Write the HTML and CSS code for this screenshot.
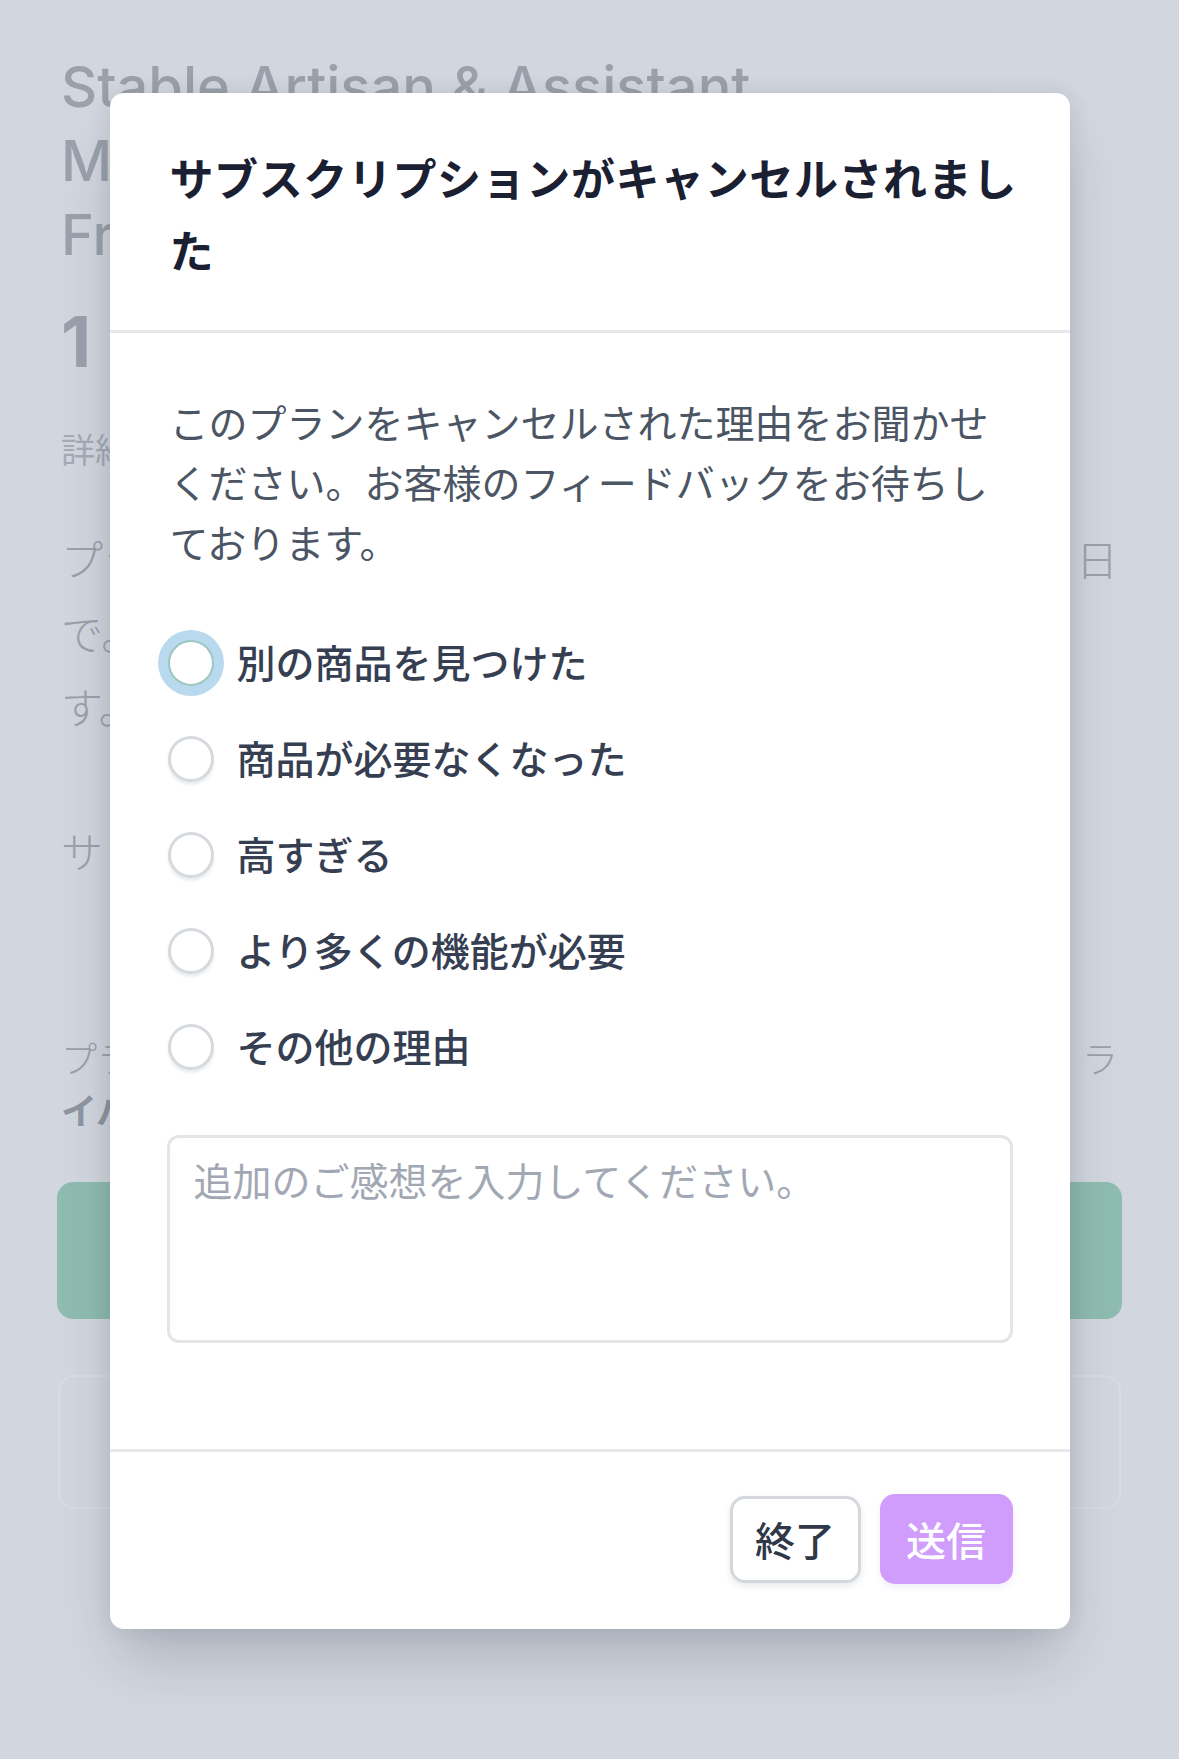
FILE: index.html
```html
<!DOCTYPE html>
<html lang="ja">
<head>
<meta charset="utf-8">
<title>サブスクリプションがキャンセルされました</title>
<link rel="stylesheet" href="styles.css">
</head>
<body>
<div class="page">
  <h1 class="product-title">
    <span class="tl">Stable Artisan &amp; Assistant</span>
    <span class="tl">Mo</span>
    <span class="tl">Fr</span>
  </h1>
  <div class="price">1</div>
  <div class="detail">詳細</div>
  <div class="para">
    <div class="pline"><span>プラ</span><span>日</span></div>
    <div class="pline"><span>で。</span><span></span></div>
    <div class="pline"><span>す。</span><span></span></div>
  </div>
  <div class="support">サ</div>
  <div class="note">
    <div class="pline"><span>プラ</span><span>ラ</span></div>
    <div class="pline bold"><span>イバ</span><span></span></div>
  </div>
  <div class="green-btn"></div>
  <div class="ghost-card"></div>
</div>

<div class="overlay">
  <div class="modal">
    <div class="modal-header">
      <h2 class="modal-title">サブスクリプションがキャンセルされました</h2>
    </div>
    <div class="modal-body">
      <p class="intro">このプランをキャンセルされた理由をお聞かせください。お客様のフィードバックをお待ちしております。</p>
      <div class="options">
        <label class="option"><span class="radio focus"></span><span class="opt-label">別の商品を見つけた</span></label>
        <label class="option"><span class="radio"></span><span class="opt-label">商品が必要なくなった</span></label>
        <label class="option"><span class="radio"></span><span class="opt-label">高すぎる</span></label>
        <label class="option"><span class="radio"></span><span class="opt-label">より多くの機能が必要</span></label>
        <label class="option"><span class="radio"></span><span class="opt-label">その他の理由</span></label>
      </div>
      <textarea class="feedback" placeholder="追加のご感想を入力してください。"></textarea>
    </div>
    <div class="modal-footer">
      <button class="btn btn-close">終了</button>
      <button class="btn btn-submit">送信</button>
    </div>
  </div>
</div>
</body>
</html>
```

FILE: styles.css
```css
html, body {
  margin: 0;
  padding: 0;
}
body {
  width: 1179px;
  height: 1759px;
  background: #d2d6de;
  font-family: "Noto Sans CJK JP", "Noto Sans", sans-serif;
  position: relative;
  overflow: hidden;
}

/* background page */
.page {
  padding: 50px 57px 0 57px;
  color: #9aa1ab;
}
.product-title {
  margin: 0;
  font-family: Inter, "Noto Sans CJK JP", sans-serif;
  font-weight: 500;
  font-size: 56px;
  line-height: 74px;
  padding-left: 4px;
}
.tl { display: block; white-space: nowrap; }
.price {
  margin-top: 30px;
  font-family: Inter, sans-serif;
  font-weight: 700;
  font-size: 70px;
  line-height: 80px;
  padding-left: 4px;
}
.detail {
  margin-top: 43px;
  font-size: 34px;
  line-height: 48px;
  color: #a4abb5;
  padding-left: 4px;
}
.para {
  margin-top: 48px;
  font-size: 42px;
  line-height: 74px;
  font-weight: 300;
}
.pline {
  display: flex;
  justify-content: space-between;
  padding-left: 4px;
  padding-right: 4px;
}
.support {
  margin-top: 70px;
  font-size: 42px;
  line-height: 74px;
  font-weight: 300;
  padding-left: 4px;
}
.note {
  margin-top: 144px;
  font-size: 36px;
  line-height: 52px;
  font-weight: 300;
}
.note .bold { font-weight: 700; color: #8f96a2; }
.green-btn {
  margin-top: 47px;
  height: 137px;
  border-radius: 16px;
  background: #8fbcb0;
}
.ghost-card {
  margin-top: 56px;
  margin-left: 1px;
  margin-right: 1px;
  height: 130px;
  border: 2px solid #d9dce2;
  border-radius: 16px;
}

/* overlay + modal */
.overlay {
  position: absolute;
  inset: 0;
  padding-top: 93px;
}
.modal {
  width: 960px;
  margin: 0 auto;
  background: #ffffff;
  border-radius: 14px;
  box-shadow: 0 36px 60px -12px rgba(30, 40, 60, 0.22), 0 0 22px rgba(30, 40, 60, 0.10);
  overflow: hidden;
}
.modal-header {
  padding: 48px 57px 45px 57px;
  border-bottom: 3px solid #e5e7eb;
}
.modal-title {
  margin: 0 -12px 0 0;
  padding-left: 3px;
  font-size: 44px;
  line-height: 72px;
  letter-spacing: 0.6px;
  font-weight: 700;
  color: #1a2032;
}
.modal-body {
  padding: 58px 57px 106px 57px;
}
.intro {
  margin: 0 -4px 0 0;
  padding-left: 3px;
  font-size: 39px;
  line-height: 60px;
  font-weight: 400;
  color: #4b5563;
}
.options {
  margin-top: 68px;
  display: flex;
  flex-direction: column;
  gap: 48px;
}
.option {
  display: flex;
  align-items: center;
  height: 48px;
  gap: 23px;
  padding-left: 1px;
}
.radio {
  width: 46px;
  height: 46px;
  box-sizing: border-box;
  border-radius: 50%;
  border: 3px solid #d6d9de;
  background: #ffffff;
  box-shadow: 0 3px 3px rgba(60, 70, 90, 0.10);
  flex: none;
}
.radio.focus {
  border: 2px solid #9cc7c0;
  box-shadow: 0 0 0 10px #b9d9ef;
}
.opt-label {
  font-size: 39px;
  line-height: 48px;
  margin-top: -4px;
  font-weight: 500;
  color: #363e52;
}
.feedback {
  display: block;
  margin-top: 64px;
  width: 100%;
  height: 208px;
  box-sizing: border-box;
  border: 3px solid #e3e5e8;
  border-radius: 12px;
  padding: 14px 24px;
  font-family: "Noto Sans CJK JP", sans-serif;
  font-size: 39px;
  line-height: 54px;
  color: #374151;
  resize: none;
  outline: none;
  background: #fff;
}
.feedback::placeholder {
  color: #a2a8b3;
}
.modal-footer {
  border-top: 3px solid #e5e7eb;
  padding: 42px 57px 45px 57px;
  display: flex;
  justify-content: flex-end;
  align-items: center;
  gap: 19px;
}
.btn {
  font-family: "Noto Sans CJK JP", sans-serif;
  font-size: 40px;
  line-height: 48px;
  font-weight: 500;
  border-radius: 15px;
  cursor: pointer;
}
.btn-close {
  width: 131px;
  height: 87px;
  background: #ffffff;
  border: 3px solid #d4d7dc;
  color: #2f3748;
  box-shadow: 0 3px 6px rgba(60, 70, 90, 0.12);
}
.btn-submit {
  width: 133px;
  height: 90px;
  background: #d09dfd;
  border: none;
  color: #ffffff;
  box-shadow: 0 3px 6px rgba(150, 100, 200, 0.12);
}
```
